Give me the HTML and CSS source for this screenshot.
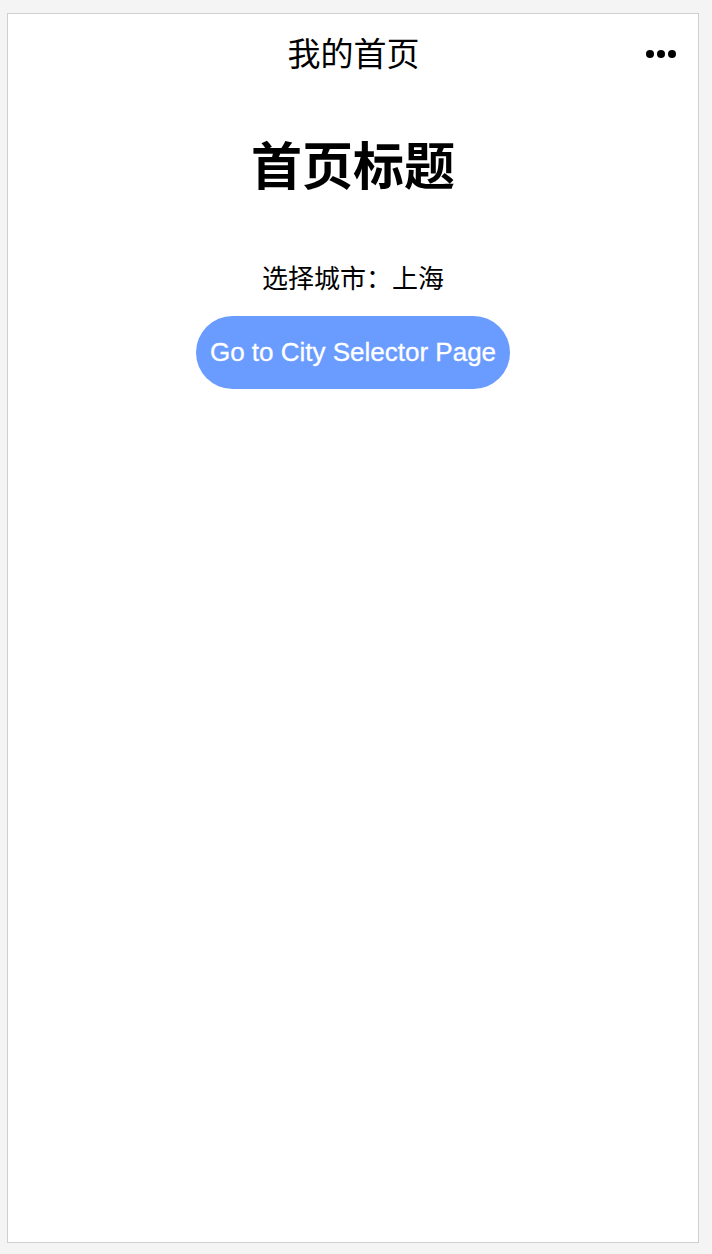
FILE: index.html
```html
<!DOCTYPE html>
<html lang="zh">
<head>
<meta charset="utf-8">
<link rel="stylesheet" href="styles.css">
</head>
<body>
<div class="phone">
  <header class="navbar">
    <span class="nav-title">我的首页</span>
    <span class="nav-more"><i></i><i></i><i></i></span>
  </header>
  <main class="content">
    <h1 class="title">首页标题</h1>
    <p class="city">选择城市：上海</p>
    <button class="btn">Go to City Selector Page</button>
  </main>
</div>
</body>
</html>
```
FILE: styles.css
```css
html, body {
  margin: 0;
  padding: 0;
  background: #f4f4f4;
  font-family: "Liberation Sans", "Noto Sans CJK SC", sans-serif;
}
body {
  padding: 13px 13px 11px 7px;
  height: 1254px;
  box-sizing: border-box;
}
.phone {
  width: 692px;
  height: 1230px;
  box-sizing: border-box;
  background: #fff;
  border: 1px solid #cfcfcf;
  display: flex;
  flex-direction: column;
}
.navbar {
  height: 80px;
  position: relative;
  display: flex;
  align-items: center;
  justify-content: center;
}
.nav-title {
  font-size: 33px;
  color: #000;
  margin-top: -5px;
  margin-left: 1px;
}
.nav-more {
  position: absolute;
  right: 22px;
  top: 36px;
  display: flex;
  gap: 3px;
}
.nav-more i {
  width: 8px;
  height: 8px;
  border-radius: 50%;
  background: #000;
  display: block;
}
.content {
  display: flex;
  flex-direction: column;
  align-items: center;
}
.title {
  margin: 39px 0 0 0;
  font-size: 51px;
  font-weight: bold;
  line-height: 70px;
  color: #000;
}
.city {
  margin: 59px 0 0 0;
  font-size: 26px;
  line-height: 34px;
  color: #000;
}
.btn {
  margin-top: 20px;
  height: 73px;
  padding: 0 14px;
  border: none;
  border-radius: 37px;
  background: #6a9cff;
  color: #fff;
  font-family: "Liberation Sans", sans-serif;
  font-size: 26px;
  letter-spacing: 0;
  -webkit-text-stroke: 0.3px #fff;
}
```
